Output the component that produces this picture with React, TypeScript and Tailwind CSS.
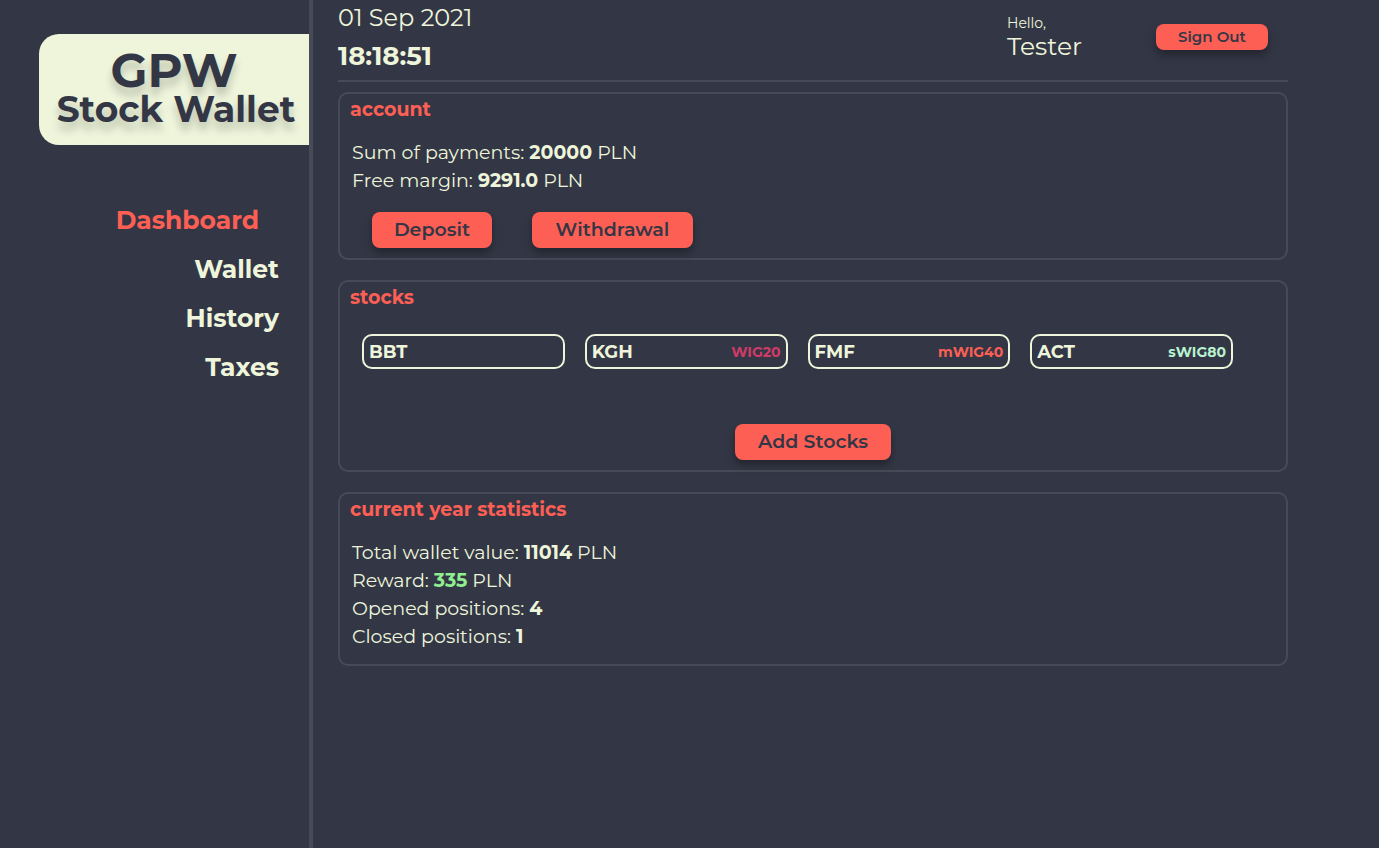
import type { ReactNode } from "react";

const navItems = ["Dashboard", "Wallet", "History", "Taxes"];

const stocks = [
  { symbol: "BBT", index: "", color: "" },
  { symbol: "KGH", index: "WIG20", color: "text-[#d13a68]" },
  { symbol: "FMF", index: "mWIG40", color: "text-[#fe5f55]" },
  { symbol: "ACT", index: "sWIG80", color: "text-[#b8f2d0]" },
];

function ActionButton({ children, size }: { children: ReactNode; size: string }) {
  return (
    <button
      type="button"
      className={`${size} cursor-pointer whitespace-nowrap rounded-lg bg-[#fe5f55] text-center font-semibold text-[#333745] shadow-[0_5px_10px_rgba(0,0,0,0.35)]`}
    >
      {children}
    </button>
  );
}

function Panel({ title, children }: { title: string; children: ReactNode }) {
  return (
    <section className="rounded-[10px] border-2 border-[#474a57] px-[10px] pb-[10px]">
      <h2 className="text-[19px] font-bold leading-8 text-[#fe5f55]">{title}</h2>
      {children}
    </section>
  );
}

export default function App() {
  return (
    <div className="flex min-h-screen bg-[#333745] font-['Montserrat','Inter',sans-serif] text-[#eef5db]">
      <aside className="w-[313px] shrink-0 border-r-4 border-[#474a57] pt-[34px]">
        <h1 className="ml-[39px] flex h-[111px] flex-col items-center rounded-l-[20px] bg-[#eef5db] pt-[14px] font-bold text-[#333745] [text-shadow:0_8px_8px_rgba(0,0,0,0.2)]">
          <span className="text-[48px] leading-[44px]">GPW</span>
          <span className="whitespace-nowrap pl-1 text-[36px] leading-[34px]">Stock Wallet</span>
        </h1>
        <nav className="mt-[51px] pr-[30px]">
          <ul className="text-right text-[25px] font-bold leading-[49px]">
            {navItems.map((item, i) => (
              <li key={item} className={i === 0 ? "pr-5 text-[#fe5f55]" : ""}>
                <a href={`#${item.toLowerCase()}`}>{item}</a>
              </li>
            ))}
          </ul>
        </nav>
      </aside>

      <main className="min-w-0 flex-1 pl-[25px] pr-[91px]">
        <header className="flex h-[82px] justify-between border-b-2 border-[#474a57]">
          <div>
            <p className="text-[24px] leading-[36px]">01 Sep 2021</p>
            <p className="text-[26px] font-bold leading-[40px]">18:18:51</p>
          </div>
          <div className="flex pr-5">
            <div className="w-[149px] pt-[13px]">
              <p className="text-[14px] leading-[20px]">Hello,</p>
              <p className="text-[25px] leading-[26px]">Tester</p>
            </div>
            <div className="pt-[24px]">
              <ActionButton size="block h-[26px] w-[112px] text-[15px]">Sign Out</ActionButton>
            </div>
          </div>
        </header>

        <div className="mt-[10px] flex flex-col gap-5">
          <Panel title="account">
            <div className="mt-[13px] pl-[2px] text-[19px] leading-[28px]">
              <p>Sum of payments: <b>20000</b> PLN</p>
              <p>Free margin: <b>9291.0</b> PLN</p>
            </div>
            <div className="mt-[17px] flex gap-10 pl-[22px]">
              <ActionButton size="h-9 w-[120px] text-[19px]">Deposit</ActionButton>
              <ActionButton size="h-9 w-[161px] text-[19px]">Withdrawal</ActionButton>
            </div>
          </Panel>

          <Panel title="stocks">
            <ul className="mt-5 grid grid-cols-4 gap-5 pl-3 pr-[43px] font-bold">
              {stocks.map((s) => (
                <li
                  key={s.symbol}
                  className="flex h-[35px] items-center justify-between rounded-[10px] border-2 border-[#eef5db] px-[5px] pt-px"
                >
                  <span className="text-[18px]">{s.symbol}</span>
                  <span className={`text-[14px] ${s.color}`}>{s.index}</span>
                </li>
              ))}
            </ul>
            <div className="mt-[55px] flex justify-center">
              <ActionButton size="h-9 w-[156px] text-[19px]">Add Stocks</ActionButton>
            </div>
          </Panel>

          <Panel title="current year statistics">
            <div className="mb-[3px] mt-[13px] pl-[2px] text-[19px] leading-[28px]">
              <p>Total wallet value: <b>11014</b> PLN</p>
              <p>Reward: <b className="text-[#90ee90]">335</b> PLN</p>
              <p>Opened positions: <b>4</b></p>
              <p>Closed positions: <b>1</b></p>
            </div>
          </Panel>
        </div>
      </main>
    </div>
  );
}
